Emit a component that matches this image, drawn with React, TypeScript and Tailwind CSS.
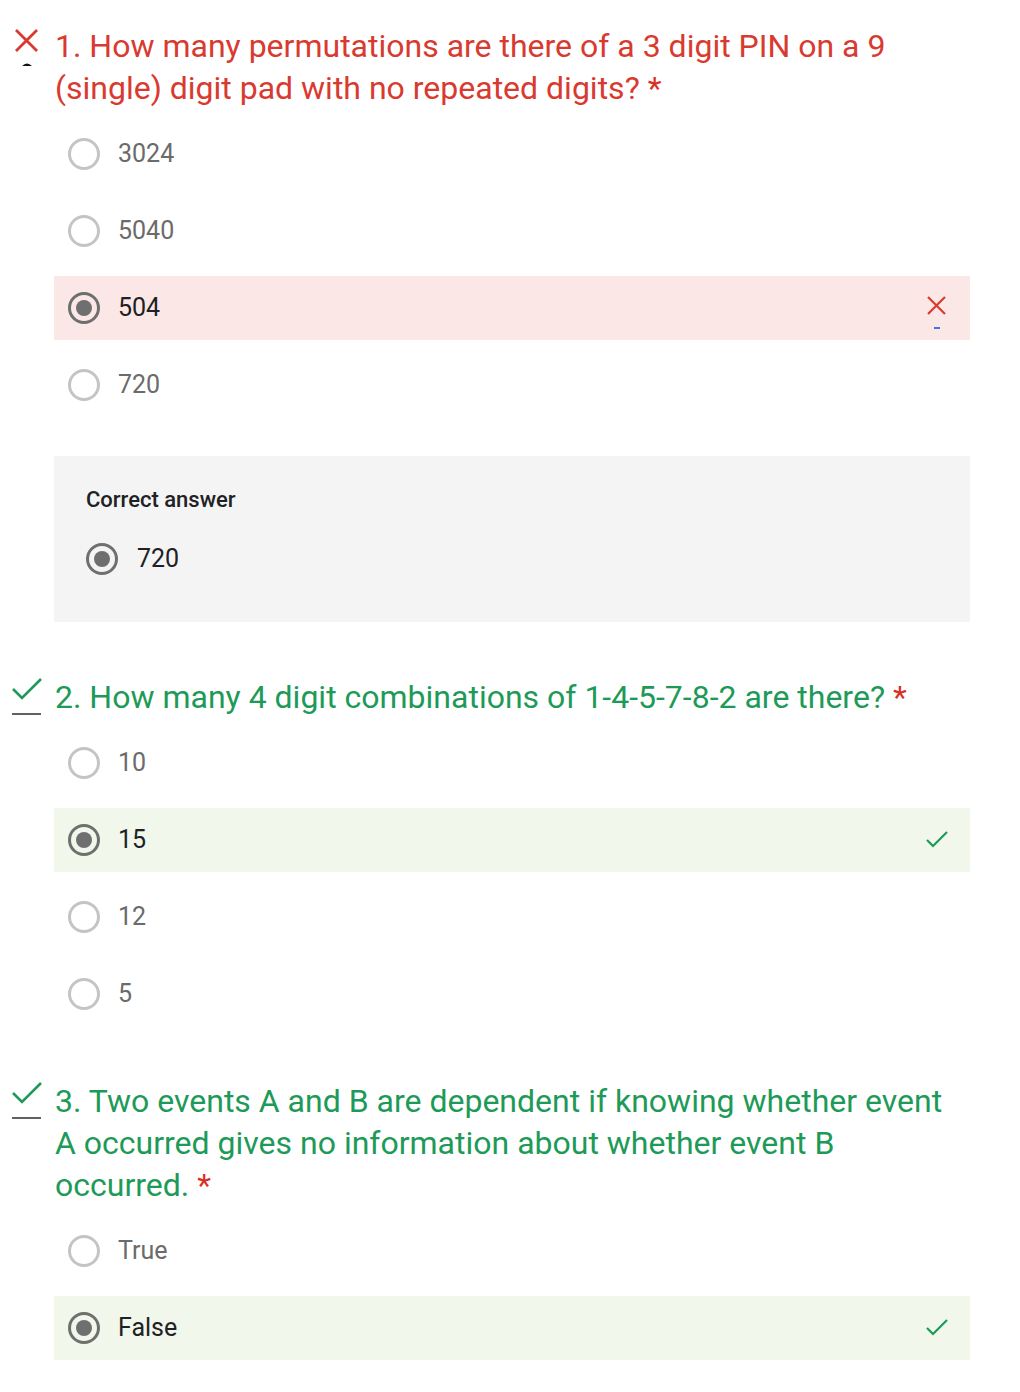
import React from "react";

const RED = "#d93a30";
const GREEN = "#1e9a58";

type Option = { label: string; selected?: boolean };

type Question = {
  title: string;
  correct: boolean;
  options: Option[];
  correctAnswer?: string;
};

const questions: Question[] = [
  {
    title:
      "1. How many permutations are there of a 3 digit PIN on a 9 (single) digit pad with no repeated digits?",
    correct: false,
    options: [
      { label: "3024" },
      { label: "5040" },
      { label: "504", selected: true },
      { label: "720" },
    ],
    correctAnswer: "720",
  },
  {
    title: "2. How many 4 digit combinations of 1-4-5-7-8-2 are there?",
    correct: true,
    options: [
      { label: "10" },
      { label: "15", selected: true },
      { label: "12" },
      { label: "5" },
    ],
  },
  {
    title:
      "3. Two events A and B are dependent if knowing whether event A occurred gives no information about whether event B occurred.",
    correct: true,
    options: [{ label: "True" }, { label: "False", selected: true }],
  },
];

function Radio({ checked }: { checked?: boolean }) {
  if (checked) {
    return (
      <div className="flex h-8 w-8 flex-shrink-0 items-center justify-center rounded-full border-[3px] border-[#6f6f6f]">
        <div className="h-4 w-4 rounded-full bg-[#6f6f6f]" />
      </div>
    );
  }
  return (
    <div className="h-8 w-8 flex-shrink-0 rounded-full border-[3px] border-[#c4c4c4]" />
  );
}

function WrongMark() {
  return (
    <svg width="40" height="48" viewBox="0 0 40 48" className="ml-[13px] mt-[4px]">
      <path d="M3 1 L24 22 M24 1 L3 22" stroke={RED} strokeWidth="2.8" fill="none" />
      <path d="M9 37 Q14 32 19 37 Z" fill="#111" />
    </svg>
  );
}

function RightMark() {
  return (
    <svg width="34" height="40" viewBox="0 0 34 40" className="ml-[12px] mt-[1px]">
      <path d="M1 12 L10 21 L29 2" stroke={GREEN} strokeWidth="2.6" fill="none" />
      <rect x="0" y="36" width="29" height="2" fill="#5f6368" />
    </svg>
  );
}

function OptionRow({ option, correct }: { option: Option; correct: boolean }) {
  const bg = option.selected ? (correct ? "bg-[#f1f7ea]" : "bg-[#fbe8e6]") : "";
  return (
    <div className={`flex h-16 items-center pl-[14px] pr-[22px] ${bg}`}>
      <Radio checked={option.selected} />
      <span
        className={`ml-[18px] flex-1 text-[25px] ${
          option.selected ? "text-[#202124]" : "text-[#6b6b6b]"
        }`}
      >
        {option.label}
      </span>
      {option.selected && !correct && (
        <svg width="22" height="34" viewBox="0 0 22 34" className="mt-[10px]">
          <path d="M2 1 L19 18 M19 1 L2 18" stroke={RED} strokeWidth="2.2" fill="none" />
          <rect x="8" y="31" width="6" height="2" fill="#3b78e7" />
        </svg>
      )}
      {option.selected && correct && (
        <svg width="22" height="18" viewBox="0 0 22 18">
          <path d="M1 9 L7 15 L21 1" stroke={GREEN} strokeWidth="2.2" fill="none" />
        </svg>
      )}
    </div>
  );
}

function QuestionBlock({ q }: { q: Question }) {
  return (
    <div className="flex">
      <div className="w-[54px] flex-shrink-0">{q.correct ? <RightMark /> : <WrongMark />}</div>
      <div className="w-[916px]">
        <div
          className="w-[900px] pl-[1px] text-[32px] leading-[42px]"
          style={{ color: q.correct ? GREEN : RED }}
        >
          {q.title} <span className="text-[#d93025]">*</span>
        </div>
        <div className="mt-[13px] flex flex-col gap-[13px]">
          {q.options.map((o) => (
            <OptionRow key={o.label} option={o} correct={q.correct} />
          ))}
        </div>
        {q.correctAnswer && (
          <div className="mt-[39px] h-[166px] bg-[#f4f4f4] pl-[32px] pt-[30px]">
            <div className="text-[22px] font-medium leading-[28px] text-[#202124]">
              Correct answer
            </div>
            <div className="mt-[26px] flex items-center">
              <Radio checked />
              <span className="ml-[19px] text-[25px] text-[#202124]">
                {q.correctAnswer}
              </span>
            </div>
          </div>
        )}
      </div>
    </div>
  );
}

export default function App() {
  return (
    <div
      className="min-h-[1392px] w-[1020px] bg-white pt-[25px]"
      style={{ fontFamily: "Roboto, 'Liberation Sans', sans-serif" }}
    >
      <div className="flex flex-col gap-[54px]">
        {questions.map((q) => (
          <QuestionBlock key={q.title} q={q} />
        ))}
      </div>
    </div>
  );
}
